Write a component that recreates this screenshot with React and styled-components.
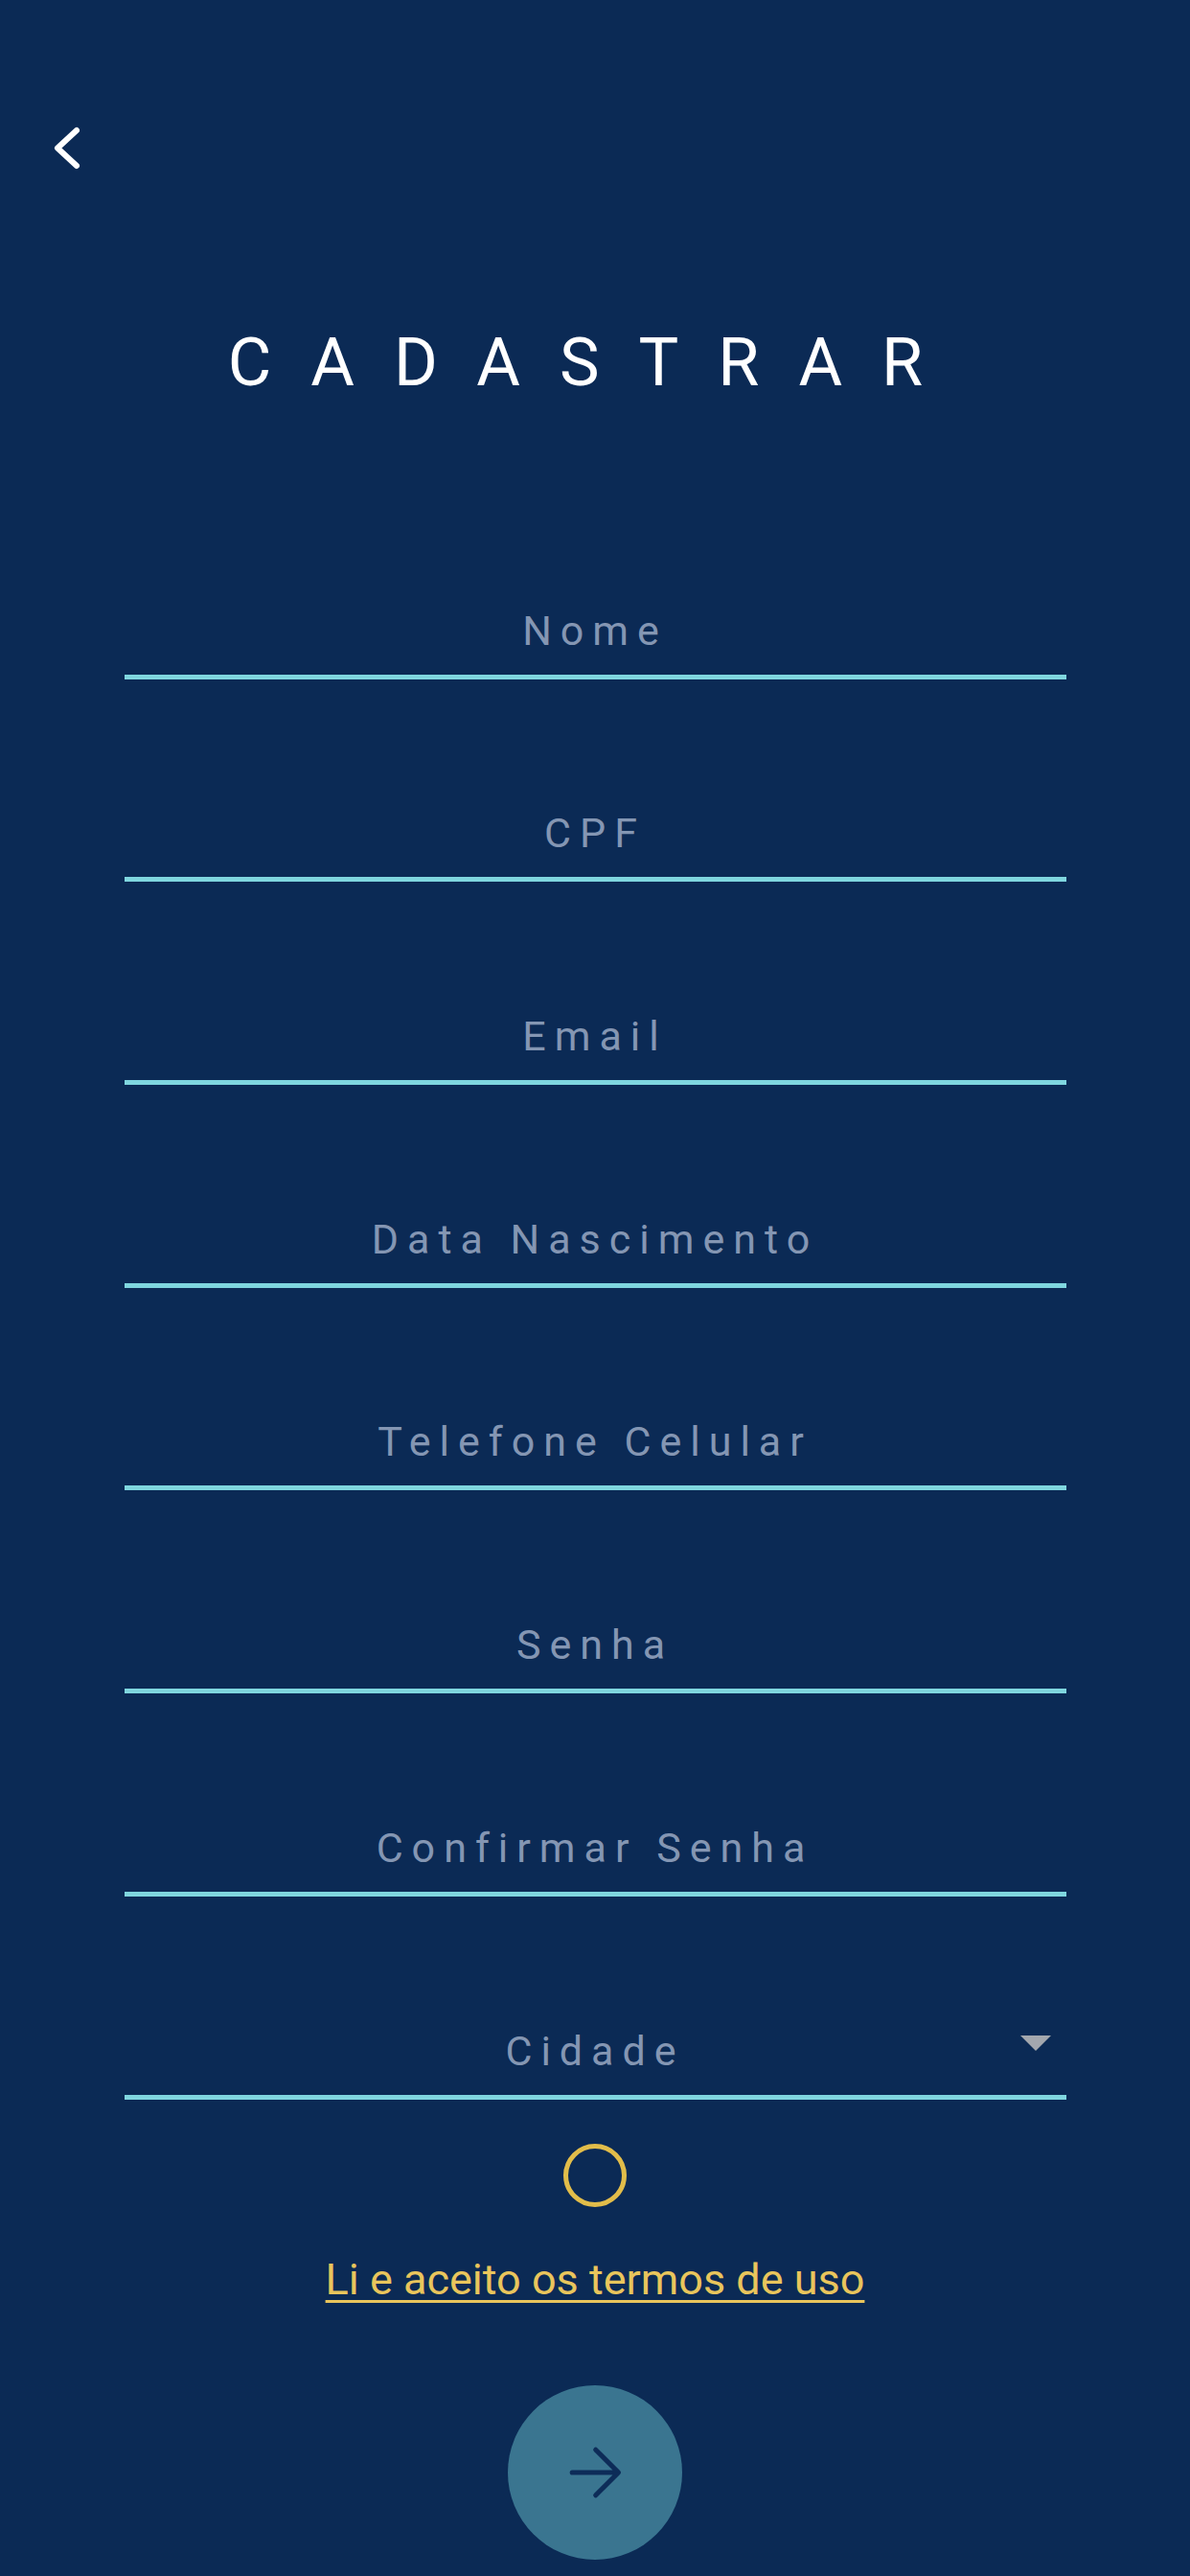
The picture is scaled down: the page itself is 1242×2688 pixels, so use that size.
import React from "react";
import styled, { createGlobalStyle } from "styled-components";

const Global = createGlobalStyle`
  html, body { margin: 0; padding: 0; background: #0b2a55; }
  body { font-family: Roboto, "Liberation Sans", Arial, sans-serif; }
  * { box-sizing: border-box; }
`;

const Page = styled.div`
  width: 1242px;
  min-height: 2688px;
  background: #0b2a55;
  display: flex;
  flex-direction: column;
`;

const Header = styled.header`
  display: flex;
  padding: 126px 0 0 50px;
`;

const BackButton = styled.button`
  width: 40px;
  height: 58px;
  padding: 0;
  border: 0;
  background: transparent;
  display: block;
  cursor: pointer;
`;

const Title = styled.h1`
  margin: 159px 0 0 0;
  font-family: Roboto, "Liberation Sans", Arial, sans-serif;
  font-weight: 400;
  font-size: 70px;
  line-height: 70px;
  letter-spacing: 41px;
  color: #ffffff;
  text-align: center;
`;

const Form = styled.form`
  display: flex;
  flex-direction: column;
  align-items: center;
  margin-top: 84px;
`;

const Field = styled.div`
  width: 983px;
  height: 211.7px;
  display: grid;
  grid-template-columns: 1fr auto 1fr;
  align-items: end;
  border-bottom: 5px solid #7fd6df;
  padding-bottom: 24px;
`;

const Label = styled.span`
  grid-column: 2;
  font-size: 43px;
  line-height: 43px;
  letter-spacing: 9px;
  color: #8496b3;
  white-space: nowrap;
`;

const Caret = styled.span`
  grid-column: 3;
  justify-self: end;
  align-self: end;
  margin: 0 16px 22px 0;
  width: 0;
  height: 0;
  border-left: 16.5px solid transparent;
  border-right: 16.5px solid transparent;
  border-top: 16px solid #a3a7ae;
`;

const Check = styled.button`
  margin-top: 46px;
  width: 66px;
  height: 66px;
  border-radius: 50%;
  border: 5px solid #e2bd4a;
  background: transparent;
  padding: 0;
  cursor: pointer;
`;

const Terms = styled.a`
  margin-top: 53px;
  font-size: 45px;
  line-height: 45px;
  color: #e9c55c;
  text-decoration: underline;
  text-decoration-thickness: 3px;
  text-underline-offset: 6px;
  cursor: pointer;
`;

const Submit = styled.button`
  margin-top: 88px;
  width: 182px;
  height: 182px;
  border-radius: 50%;
  border: 0;
  background: #3a7590;
  display: flex;
  align-items: center;
  justify-content: center;
  padding: 0;
  cursor: pointer;
`;

const fields = [
  "Nome",
  "CPF",
  "Email",
  "Data Nascimento",
  "Telefone Celular",
  "Senha",
  "Confirmar Senha",
];

export default function App() {
  return (
    <>
      <Global />
      <Page>
        <Header>
          <BackButton aria-label="Voltar">
            <svg width="40" height="58" viewBox="0 0 40 58">
              <polyline
                points="30,10 10,28.5 30,47"
                fill="none"
                stroke="#ffffff"
                strokeWidth="6"
                strokeLinecap="round"
                strokeLinejoin="round"
              />
            </svg>
          </BackButton>
        </Header>
        <Title>CADASTRAR</Title>
        <Form onSubmit={(e) => e.preventDefault()}>
          {fields.map((f) => (
            <Field key={f}>
              <Label>{f}</Label>
            </Field>
          ))}
          <Field>
            <Label>Cidade</Label>
            <Caret />
          </Field>
          <Check type="button" aria-label="Aceitar termos" />
          <Terms>Li e aceito os termos de uso</Terms>
          <Submit type="submit" aria-label="Avançar">
            <svg width="84" height="84" viewBox="0 0 24 24">
              <path
                d="M5.2 12h13.4M12.2 5.2 19 12l-6.8 6.8"
                fill="none"
                stroke="#0d2c58"
                strokeWidth="1.45"
                strokeLinecap="round"
                strokeLinejoin="round"
              />
            </svg>
          </Submit>
        </Form>
      </Page>
    </>
  );
}
